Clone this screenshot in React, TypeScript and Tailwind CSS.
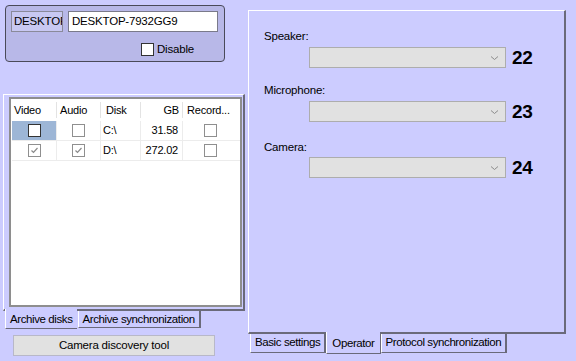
import React from 'react';

const font = { fontFamily: '"Liberation Sans", Arial, sans-serif' };

const Check = ({ checked = false, dim = true }: { checked?: boolean; dim?: boolean }) => (
  <div
    className={`w-[13px] h-[13px] bg-white border flex items-center justify-center ${
      dim ? 'border-[#8f8f8f]' : 'border-[#333333]'
    }`}
  >
    {checked && (
      <svg width="9" height="9" viewBox="0 0 9 9">
        <path d="M1.5 4.5 L3.5 6.5 L7.5 2" fill="none" stroke="#8a8a8a" strokeWidth="1.2" />
      </svg>
    )}
  </div>
);

const Combo = ({ n }: { n: string }) => (
  <div className="flex items-center ml-[60px]">
    <div className="w-[197px] h-[21px] bg-[#e1e1e1] border border-[#adadad] flex items-center justify-end pr-[6px]">
      <svg width="9" height="6" viewBox="0 0 9 6">
        <path d="M1 1.5 L4.5 4.5 L8 1.5" fill="none" stroke="#8c8c8c" strokeWidth="1" />
      </svg>
    </div>
    <span className="ml-[6px] text-[19px] font-bold text-black leading-none">{n}</span>
  </div>
);

const rows = [
  { video: false, audio: false, disk: 'C:\\', gb: '31.58', sel: true },
  { video: true, audio: true, disk: 'D:\\', gb: '272.02', sel: false },
];

export default function App() {
  return (
    <div
      className="w-[576px] h-[361px] bg-[#ccccff] flex text-[11px] tracking-[-0.2px] text-black overflow-hidden"
      style={font}
    >
      {/* Left column */}
      <div className="w-[248px] flex flex-col">
        <div className="ml-[5px] mt-[5px] w-[220px] h-[57px] rounded-[4px] border border-[#4a4a5a] bg-[#b8b8e8] px-[5px] pt-[5px]">
          <div className="flex gap-[5px]">
            <div className="w-[52px] h-[21px] border border-[#8a8a9a] bg-[#c8c8f2] overflow-hidden whitespace-nowrap pl-[2px] leading-[19px] text-[11.5px]">
              DESKTOP
            </div>
            <div className="w-[150px] h-[21px] bg-white border border-[#7a7a8a] pl-[3px] leading-[19px] text-[11.5px]">
              DESKTOP-7932GG9
            </div>
          </div>
          <div className="flex items-center mt-[9px] ml-[130px] gap-[3px]">
            <Check dim={false} />
            <span className="text-[11.5px]">Disable</span>
          </div>
        </div>

        {/* Archive panel */}
        <div className="ml-[3px] mt-[32px] w-[242px] h-[217px] border-l border-t border-l-white border-t-white border-r-2 border-b-2 border-r-[#6a6a7a] border-b-[#6a6a7a] pl-[5px] pt-[2px] pr-[1px] pb-[2px]">
          <div className="w-full h-full bg-white border-2 border-[#8e8e8e] pl-[1px]">
            <div className="flex h-[22px] items-center">
              <div className="w-[44px] pl-[2px]">Video</div>
              <div className="w-[44px] pl-[3px] border-l border-[#e3e3e3]">Audio</div>
              <div className="w-[40px] pl-[5px] border-l border-[#e3e3e3]">Disk</div>
              <div className="w-[42px] pr-[3px] text-right border-l border-[#e3e3e3]">GB</div>
              <div className="w-[56px] pl-[4px] border-l border-[#e3e3e3]">Record...</div>
            </div>
            {rows.map((r, i) => (
              <div key={i} className="flex h-[20px] border-b border-[#ececec]">
                <div
                  className={`w-[44px] flex items-center justify-center ${r.sel ? 'bg-[#9db6d6]' : ''}`}
                >
                  <Check checked={r.video} dim={!r.sel} />
                </div>
                <div className="w-[44px] flex items-center justify-center border-l border-[#ececec]">
                  <Check checked={r.audio} />
                </div>
                <div className="w-[40px] pl-[2px] flex items-center border-l border-[#ececec]">{r.disk}</div>
                <div className="w-[42px] pr-[4px] flex items-center justify-end border-l border-[#ececec]">
                  {r.gb}
                </div>
                <div className="w-[56px] flex items-center justify-center border-l border-[#ececec]">
                  <Check />
                </div>
              </div>
            ))}
          </div>
        </div>

        {/* Left tabs */}
        <div className="flex ml-[5px] items-start tracking-[-0.4px]">
          <div className="h-[20px] px-[4px] -mt-[2px] pt-[2px] bg-[#ccccff] border-l border-l-white border-b border-b-[#6a6a7a] leading-[17px] text-[11.5px]">
            Archive disks
          </div>
          <div className="h-[17px] px-[4px] ml-[1px] border-l border-l-white border-r-2 border-r-[#6a6a7a] border-b border-b-[#6a6a7a] leading-[16px] text-[11.5px]">
            Archive synchronization
          </div>
        </div>

        <div className="ml-[13px] mt-[6px] w-[202px] h-[21px] bg-[#e1e1e1] border border-[#b8b8c8] flex items-center justify-center text-[11.5px]">
          Camera discovery tool
        </div>
      </div>

      {/* Right column */}
      <div className="flex flex-col pt-[10px]">
        <div className="w-[318px] h-[324px] border-l border-t border-l-white border-t-white border-r-2 border-b-2 border-r-[#6a6a7a] border-b-[#6a6a7a] pl-[15px] pt-[18px]">
          <div className="text-[11.5px] leading-[14px]">Speaker:</div>
          <div className="mt-[4px] -ml-[15px]">
            <Combo n="22" />
          </div>
          <div className="mt-[15px] text-[11.5px] leading-[14px]">Microphone:</div>
          <div className="mt-[4px] -ml-[15px]">
            <Combo n="23" />
          </div>
          <div className="mt-[18px] text-[11.5px] leading-[14px]">Camera:</div>
          <div className="mt-[3px] -ml-[15px]">
            <Combo n="24" />
          </div>
        </div>
        <div className="flex items-start ml-[2px] tracking-[-0.4px]">
          <div className="h-[19px] px-[4px] border-l border-l-white border-r-2 border-r-[#6a6a7a] border-b border-b-[#6a6a7a] leading-[17px] text-[11.5px]">
            Basic settings
          </div>
          <div className="h-[22px] px-[5px] -mt-[2px] pt-[3px] bg-[#ccccff] border-l border-l-white border-r border-r-[#6a6a7a] border-b border-b-[#6a6a7a] leading-[16px] text-[11.5px]">
            Operator
          </div>
          <div className="h-[19px] px-[4px] border-l border-l-white border-r-2 border-r-[#6a6a7a] border-b border-b-[#6a6a7a] leading-[17px] text-[11.5px]">
            Protocol synchronization
          </div>
        </div>
      </div>
    </div>
  );
}
